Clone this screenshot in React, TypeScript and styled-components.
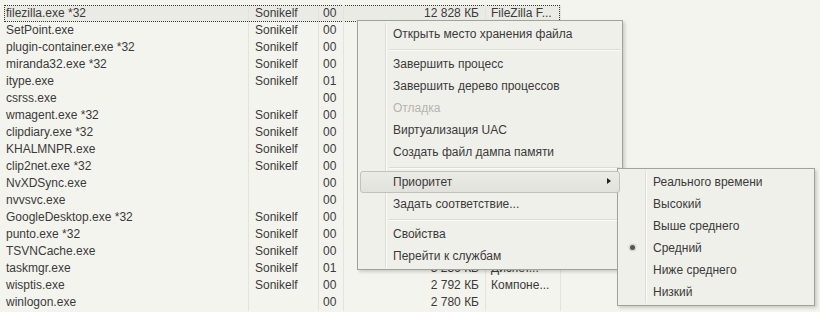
import React from 'react'
import styled, { createGlobalStyle } from 'styled-components'

const GlobalStyle = createGlobalStyle`
    html, body {
        margin: 0;
        padding: 0;
        background: #f4f4ee;
    }
    body {
        font-family: "Liberation Sans", Arial, sans-serif;
        font-size: 12px;
        color: #3a3a3a;
    }
`

interface Proc {
    name: string;
    user: string;
    cpu: string;
    mem: string;
    desc: string;
}

// rows under the context menu keep only the columns that stay visible
const processes: Proc[] = [
    { name: 'filezilla.exe *32', user: 'Sonikelf', cpu: '00', mem: '12 828 КБ', desc: 'FileZilla F...' },
    { name: 'SetPoint.exe', user: 'Sonikelf', cpu: '00', mem: '', desc: '' },
    { name: 'plugin-container.exe *32', user: 'Sonikelf', cpu: '00', mem: '', desc: '' },
    { name: 'miranda32.exe *32', user: 'Sonikelf', cpu: '00', mem: '', desc: '' },
    { name: 'itype.exe', user: 'Sonikelf', cpu: '01', mem: '', desc: '' },
    { name: 'csrss.exe', user: '', cpu: '00', mem: '', desc: '' },
    { name: 'wmagent.exe *32', user: 'Sonikelf', cpu: '00', mem: '', desc: '' },
    { name: 'clipdiary.exe *32', user: 'Sonikelf', cpu: '00', mem: '', desc: '' },
    { name: 'KHALMNPR.exe', user: 'Sonikelf', cpu: '00', mem: '', desc: '' },
    { name: 'clip2net.exe *32', user: 'Sonikelf', cpu: '00', mem: '', desc: '' },
    { name: 'NvXDSync.exe', user: '', cpu: '00', mem: '', desc: '' },
    { name: 'nvvsvc.exe', user: '', cpu: '00', mem: '', desc: '' },
    { name: 'GoogleDesktop.exe *32', user: 'Sonikelf', cpu: '00', mem: '', desc: '' },
    { name: 'punto.exe *32', user: 'Sonikelf', cpu: '00', mem: '', desc: '' },
    { name: 'TSVNCache.exe', user: 'Sonikelf', cpu: '00', mem: '', desc: '' },
    { name: 'taskmgr.exe', user: 'Sonikelf', cpu: '01', mem: '3 236 КБ', desc: 'Диспет...' },
    { name: 'wisptis.exe', user: 'Sonikelf', cpu: '00', mem: '2 792 КБ', desc: 'Компоне...' },
    { name: 'winlogon.exe', user: '', cpu: '00', mem: '2 780 КБ', desc: '' },
]

type MenuEntry = { label: string; disabled?: boolean; active?: boolean; submenu?: boolean } | 'sep'

const menuItems: MenuEntry[] = [
    { label: 'Открыть место хранения файла' },
    'sep',
    { label: 'Завершить процесс' },
    { label: 'Завершить дерево процессов' },
    { label: 'Отладка', disabled: true },
    { label: 'Виртуализация UAC' },
    { label: 'Создать файл дампа памяти' },
    'sep',
    { label: 'Приоритет', active: true, submenu: true },
    { label: 'Задать соответствие...' },
    'sep',
    { label: 'Свойства' },
    { label: 'Перейти к службам' },
]

const priorities = ['Реального времени', 'Высокий', 'Выше среднего', 'Средний', 'Ниже среднего', 'Низкий']

const Screen = styled.div`
    position: relative;
    width: 820px;
    height: 312px;
    overflow: hidden;
    background: #f4f4ee;
`
const Table = styled.div`
    display: flex;
    flex-direction: column;
    padding-top: 5px;
`
const Row = styled.div<{ focused?: boolean }>`
    display: grid;
    grid-template-columns: 244px 70px 25px 142px 75px;
    height: 17px;
    line-height: 17px;
    margin-left: 4px;
    width: 556px;
    box-sizing: border-box;
    border: 1px dotted ${(p) => (p.focused ? '#3a3a3a' : 'transparent')};
    background: ${(p) => (p.focused ? '#ebebe5' : 'transparent')};
`
const Cell = styled.div<{ right?: boolean; pad?: number }>`
    white-space: nowrap;
    overflow: hidden;
    color: #3a3a3a;
    text-align: ${(p) => (p.right ? 'right' : 'left')};
    padding: 0 ${(p) => (p.right ? 6 : 0)}px 0 ${(p) => p.pad ?? 0}px;
    border-right: 1px solid #e4e4dc;
    margin-top: -1px;
    height: 17px;
`

const Menu = styled.div<{ left: number; top: number; width: number }>`
    position: absolute;
    left: ${(p) => p.left}px;
    top: ${(p) => p.top}px;
    width: ${(p) => p.width}px;
    box-sizing: border-box;
    padding: 2px;
    background: #f0f0ea;
    border: 1px solid #a2a29c;
    box-shadow: 2px 2px 3px rgba(0, 0, 0, 0.16);
    display: flex;
    flex-direction: column;

    &::before {
        content: '';
        position: absolute;
        left: 27px;
        top: 2px;
        bottom: 2px;
        width: 1px;
        background: #dcdcd6;
        box-shadow: 1px 0 0 #fbfbf8;
    }
`
const Item = styled.div<{ disabled?: boolean; active?: boolean }>`
    position: relative;
    height: 22px;
    line-height: 20px;
    box-sizing: border-box;
    padding-left: 32px;
    border: 1px solid ${(p) => (p.active ? '#c2c2ba' : 'transparent')};
    border-radius: 3px;
    background: ${(p) => (p.active ? 'linear-gradient(#ecece6, #e2e2dc)' : 'transparent')};
    color: ${(p) => (p.disabled ? '#b4b4ae' : '#3a3a3a')};
    white-space: nowrap;
    z-index: 1;
`
const Separator = styled.div`
    height: 8px;
    display: flex;
    align-items: center;
    padding-left: 29px;

    &::after {
        content: '';
        flex: 1;
        height: 1px;
        background: #dcdcd6;
        box-shadow: 0 1px 0 #fbfbf8;
    }
`
const Arrow = styled.span`
    position: absolute;
    right: 8px;
    top: 6px;
    width: 0;
    height: 0;
    border-top: 3.5px solid transparent;
    border-bottom: 3.5px solid transparent;
    border-left: 4px solid #222;
`
const Bullet = styled.span`
    position: absolute;
    left: 9px;
    top: 7px;
    width: 5px;
    height: 5px;
    border-radius: 50%;
    background: #555;
    box-shadow: 0 0 0 1.5px #d8d8d2;
`

export default function App() {
    return (
        <Screen>
            <GlobalStyle />
            <Table>
                {processes.map((p, i) => (
                    <Row key={p.name} focused={i === 0}>
                        <Cell pad={1}>{p.name}</Cell>
                        <Cell pad={6}>{p.user}</Cell>
                        <Cell pad={4}>{p.cpu}</Cell>
                        <Cell right>{p.mem}</Cell>
                        <Cell pad={5}>{p.desc}</Cell>
                    </Row>
                ))}
            </Table>

            <Menu left={357} top={20} width={266}>
                {menuItems.map((m, i) =>
                    m === 'sep' ? (
                        <Separator key={i} />
                    ) : (
                        <Item key={i} disabled={m.disabled} active={m.active}>
                            {m.label}
                            {m.submenu && <Arrow />}
                        </Item>
                    )
                )}
            </Menu>

            <Menu left={617} top={168} width={198}>
                {priorities.map((label) => (
                    <Item key={label}>
                        {label === 'Средний' && <Bullet />}
                        {label}
                    </Item>
                ))}
            </Menu>
        </Screen>
    )
}
